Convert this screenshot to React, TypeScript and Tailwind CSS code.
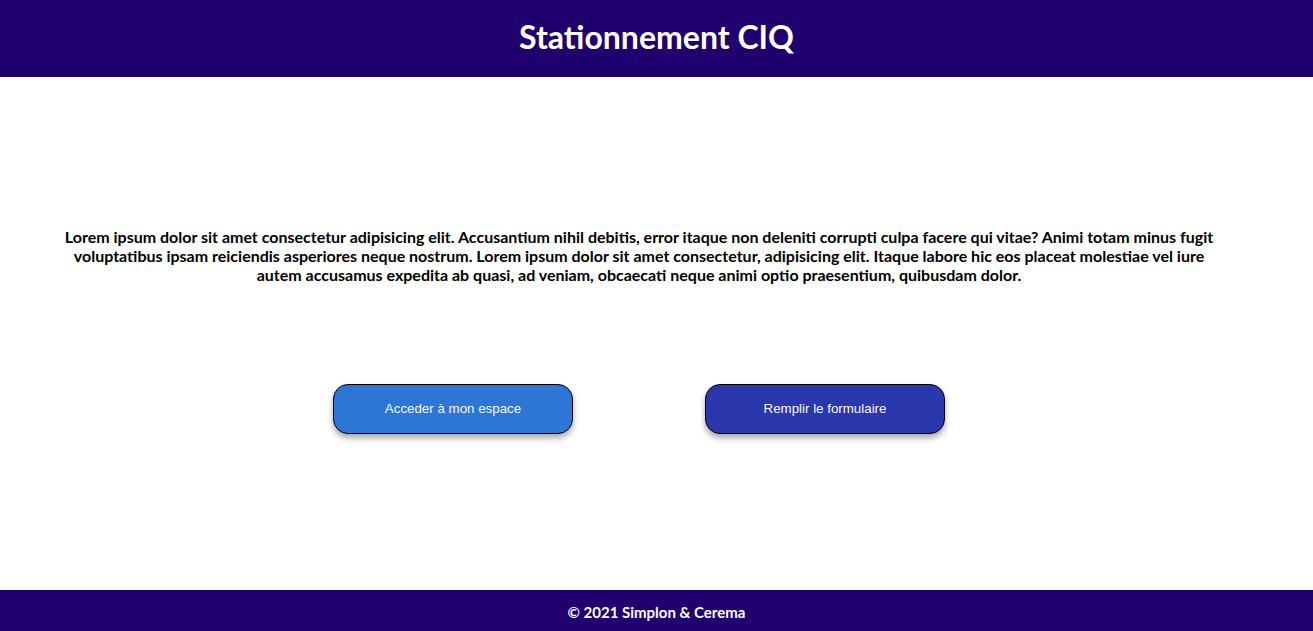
export default function App() {
  return (
    <div className="h-screen flex flex-col bg-white font-['Lato','Noto_Sans',sans-serif]">
      <header className="h-[77px] bg-[#1f006e] flex items-center justify-center pb-[4px]">
        <h1 className="text-[32px] font-bold text-white leading-none">Stationnement CIQ</h1>
      </header>

      <main className="flex-1 flex flex-col items-center pr-[35px]">
        <p className="mt-[150px] px-[55px] text-center text-[16px] leading-[19px] font-bold text-black">
          Lorem ipsum dolor sit amet consectetur adipisicing elit. Accusantium nihil debitis, error itaque non
          deleniti corrupti culpa facere qui vitae? Animi totam minus fugit voluptatibus ipsam reiciendis
          asperiores neque nostrum. Lorem ipsum dolor sit amet consectetur, adipisicing elit. Itaque labore hic
          eos placeat molestiae vel iure autem accusamus expedita ab quasi, ad veniam, obcaecati neque animi
          optio praesentium, quibusdam dolor.
        </p>

        <div className="mt-[100px] w-full flex justify-center gap-[132px]">
          <button className="w-[240px] h-[50px] rounded-[15px] border border-black bg-[#2d76d6] text-[#f4f8ff] text-[13.33px] font-['Liberation_Sans',Arial,sans-serif] shadow-[0_4px_6px_rgba(0,0,0,0.35)]">
            Acceder à mon espace
          </button>
          <button className="w-[240px] h-[50px] rounded-[15px] border border-black bg-[#2b37ad] text-[#f4f8ff] text-[13.33px] font-['Liberation_Sans',Arial,sans-serif] shadow-[0_4px_6px_rgba(0,0,0,0.35)]">
            Remplir le formulaire
          </button>
        </div>
      </main>

      <footer className="h-[41px] bg-[#1f006e] flex items-center justify-center pt-[3px]">
        <p className="text-white font-bold text-[15px]">© 2021 Simplon &amp; Cerema</p>
      </footer>
    </div>
  );
}
